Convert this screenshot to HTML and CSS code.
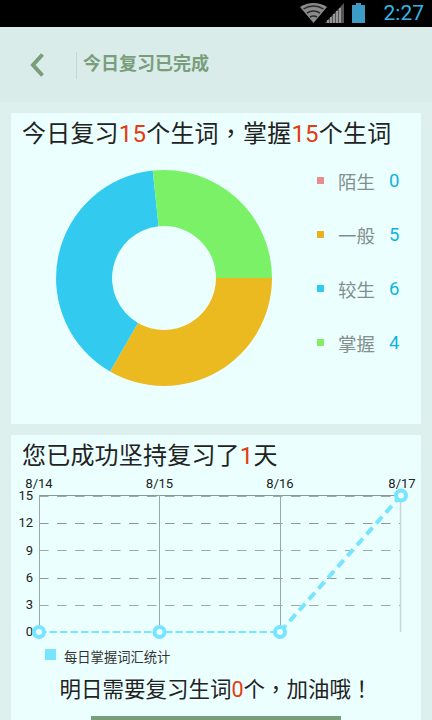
FILE: index.html
```html
<!DOCTYPE html>
<html lang="zh">
<head>
<meta charset="utf-8">
<title>今日复习已完成</title>
<link rel="stylesheet" href="styles.css">
</head>
<body>
<div class="phone">
  <div class="statusbar">
    <svg class="status-icons" width="80" height="27" viewBox="0 0 80 27">
      <path d="M0 7 C8 1.5 19 1.5 27 7 L13.500 23 Z" fill="#8a8a8a"/>
      <path d="M3.500 9 C9.500 5 17.500 5 23.500 9" fill="none" stroke="#2a2a2a" stroke-width="1.500"/>
      <path d="M7 13 C11 10.500 16 10.500 20 13" fill="none" stroke="#2a2a2a" stroke-width="1.500"/>
      <path d="M10 17 C12 15.800 15 15.800 17 17" fill="none" stroke="#2a2a2a" stroke-width="1.500"/>
      <path d="M25 23 L44 3 V23 Z" fill="#555"/>
      <path d="M28 23 v-3 M31 23 v-6 M34 23 v-9 M37 23 v-12 M40 23 v-15" stroke="#a8a8a8" stroke-width="1.600"/>
      <path d="M56 3 h5 v2 h4 v18 h-13 v-18 h4 z" fill="#3d9cc6"/>
    </svg>
    <span class="clock">2:27</span>
  </div>
  <header class="appbar">
    <svg class="back" width="16" height="26" viewBox="0 0 16 26"><path d="M13.500 2.500 L4 13 L13.500 23.500" fill="none" stroke="#7a9d7c" stroke-width="4"/></svg>
    <div class="divider"></div>
    <h1 class="title">今日复习已完成</h1>
  </header>
  <main class="content">
    <section class="card card-summary">
      <h2 class="heading">今日复习<em>15</em>个生词<span class="punct" lang="zh-Hant">，</span>掌握<em>15</em>个生词</h2>
      <div class="summary-body">
        <svg class="pie" width="220" height="220" viewBox="-110 -110 220 220">
          <path d="M108 0 A108 108 0 0 1 -54 93.500 L-26 45 A52 52 0 0 0 52 0 Z" fill="#ebba20"/>
          <path d="M-54 93.500 A108 108 0 0 1 -11.300 -107.400 L-5.400 -51.700 A52 52 0 0 0 -26 45 Z" fill="#32cbef"/>
          <path d="M-11.300 -107.400 A108 108 0 0 1 108 0 L52 0 A52 52 0 0 0 -5.400 -51.700 Z" fill="#7af167"/>
        </svg>
        <ul class="legend">
          <li class="legend-row"><i class="dot dot-red"></i><span class="name">陌生</span><span class="num">0</span></li>
          <li class="legend-row"><i class="dot dot-orange"></i><span class="name">一般</span><span class="num">5</span></li>
          <li class="legend-row"><i class="dot dot-blue"></i><span class="name">较生</span><span class="num">6</span></li>
          <li class="legend-row"><i class="dot dot-green"></i><span class="name">掌握</span><span class="num">4</span></li>
        </ul>
      </div>
    </section>
    <section class="card card-chart">
      <h2 class="heading heading-small">您已成功坚持复习了<em>1</em>天</h2>
      <svg class="chart" width="410" height="172" viewBox="11 472 410 172">
        <g class="xlabels">
          <text x="39" y="488" text-anchor="middle" class="t">8/14</text>
          <text x="159.500" y="488" text-anchor="middle" class="t">8/15</text>
          <text x="280" y="488" text-anchor="middle" class="t">8/16</text>
          <text x="402" y="488" text-anchor="middle" class="t">8/17</text>
        </g>
        <g class="ylabels">
          <text x="33" y="500" text-anchor="end" class="t">15</text>
          <text x="33" y="527" text-anchor="end" class="t">12</text>
          <text x="33" y="555" text-anchor="end" class="t">9</text>
          <text x="33" y="582" text-anchor="end" class="t">6</text>
          <text x="33" y="609" text-anchor="end" class="t">3</text>
          <text x="33" y="636" text-anchor="end" class="t">0</text>
        </g>
        <path d="M39 495.500 H401" stroke="#8c9997" stroke-width="1"/>
        <g stroke="#9cabaa" stroke-width="1" stroke-dasharray="9.500 8.500">
          <path d="M39 496.500 H401"/>
          <path d="M39 523.500 H401" stroke="#8b9998"/>
          <path d="M39 550.500 H401"/>
          <path d="M39 578.500 H401" stroke="#8b9998"/>
          <path d="M39 605.500 H401"/>
        </g>
        <path d="M39.500 495 V632 M159.500 495 V632 M280.500 495 V632" stroke="#9aa8a7" stroke-width="1"/>
        <path d="M400.500 495 V632" stroke="#c6d6d5" stroke-width="1.500"/>
        <path d="M39 632 H280" stroke="#77e5ff" stroke-width="2" stroke-dasharray="7.500 3" fill="none"/>
        <path d="M280 632 L401 495.500" stroke="#77e5ff" stroke-width="4" stroke-dasharray="9 5.500" fill="none"/>
        <g fill="#ebfffe" stroke="#77e5ff" stroke-width="4">
          <circle cx="39" cy="632" r="5"/>
          <circle cx="159.500" cy="632" r="5"/>
          <circle cx="280" cy="632" r="5"/>
          <circle cx="401" cy="495.500" r="5"/>
        </g>
      </svg>
      <div class="chart-legend"><i class="swatch"></i><span>每日掌握词汇统计</span></div>
      <p class="tomorrow">明日需要复习生词<em>0</em>个<span class="punct" lang="zh-Hant">，</span>加油哦<span class="punct" lang="zh-Hant">！</span></p>
      <div class="action"></div>
    </section>
  </main>
</div>
</body>
</html>
```

FILE: styles.css
```css
* { box-sizing: border-box; }
html, body { margin: 0; padding: 0; }
body {
  width: 432px;
  height: 720px;
  overflow: hidden;
  font-family: "Roboto", "Noto Sans CJK SC", sans-serif;
  background: #ddf0ee;
}
.phone { width: 432px; height: 720px; overflow: hidden; display: flex; flex-direction: column; }
.statusbar {
  height: 27px;
  flex: none;
  background: #000;
  display: flex;
  justify-content: flex-end;
  align-items: center;
  padding-right: 8px;
}
.status-icons { display: block; }
.clock { color: #33b5e5; font-size: 21px; line-height: 27px; width: 44px; text-align: right; }
.appbar {
  height: 75px;
  flex: none;
  background: #d9ecea;
  display: flex;
  align-items: center;
  padding: 0 0 0 29px;
}
.back { display: block; margin-top: 1px; }
.divider { width: 1px; height: 27px; background: #c2d8d2; margin-left: 31px; margin-top: 1px; }
.title { margin: -2px 0 0 6px; font-size: 18px; font-weight: 700; color: #7a9d7c; line-height: 24px; }
.content { padding: 11px 11px 0; display: flex; flex-direction: column; gap: 11px; }
.card { background: #ebfffe; width: 410px; }
.card-summary { height: 311px; padding-top: 6px; }
.heading {
  margin: 0;
  padding-left: 11px;
  height: 30px;
  font-size: 24px;
  line-height: 30px;
  font-weight: 400;
  letter-spacing: 0.2px;
  color: #222;
}
.heading-small { height: 37px; padding-top: 6px; }
.punct { font-family: "Noto Sans CJK TC", sans-serif; line-height: 1; }
em { font-style: normal; color: #e63b10; }
.summary-body { display: flex; align-items: flex-start; padding: 19px 0 0 43px; }
.pie { display: block; flex: none; }
.legend { list-style: none; margin: -1px 0 0; padding: 0 0 0 43px; display: flex; flex-direction: column; gap: 27px; }
.legend-row { display: flex; align-items: center; height: 27px; }
.dot { width: 7px; height: 7px; flex: none; }
.dot-red { background: #ec8a8c; }
.dot-orange { background: #ebb020; }
.dot-blue { background: #32cbef; }
.dot-green { background: #85ee60; }
.name { font-size: 18.500px; color: #838f8e; margin-left: 14px; width: 37px; }
.num { font-size: 18.500px; color: #0fb4de; margin-left: 14px; }
.card-chart { height: 300px; }
.chart { display: block; }
.t { font-family: "Roboto", sans-serif; font-size: 13px; fill: #222; }
.chart-legend { display: flex; align-items: center; height: 16px; margin-top: 4px; padding-left: 34px; font-size: 13.300px; color: #333; }
.swatch { width: 11px; height: 11px; background: #77e5ff; margin-right: 8px; position: relative; top: -2px; }
.tomorrow { margin: 11px 0 0; height: 30px; text-align: center; font-size: 21.500px; line-height: 30px; color: #222; }
.action { width: 250px; height: 30px; background: #7a9d7c; margin: 11px 0 0 80px; }
```
